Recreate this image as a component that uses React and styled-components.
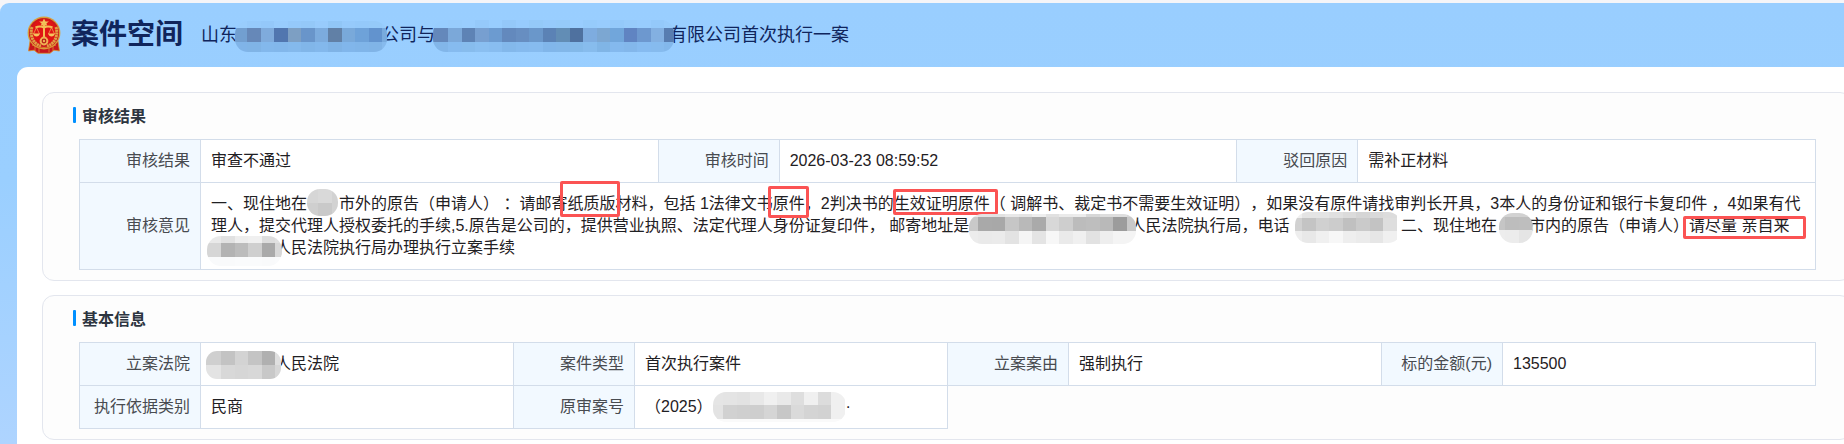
import React from 'react'
import styled, { createGlobalStyle } from 'styled-components'

const GlobalStyle = createGlobalStyle`
  *,
  *::before,
  *::after {
    box-sizing: border-box;
  }
  body {
    margin: 0;
    background: #f5f5f8;
    overflow: hidden;
    font-family: 'Liberation Sans', 'Noto Sans CJK SC', sans-serif;
    font-size: 16px;
    text-spacing-trim: space-all;
  }
`

const Page = styled.div`
  height: 441px;
  margin-top: 3px;
  padding-left: 17px;
  border-top-left-radius: 9px;
  background: linear-gradient(180deg, #99ceff 0%, #9acfff 40%, #aed4ff 100%);
  overflow: hidden;
`

const Header = styled.header`
  height: 64px;
  padding-left: 10px;
  display: flex;
  align-items: center;
`

const Title = styled.h1`
  margin: 0 0 0 10px;
  width: 130px;
  font-size: 28px;
  line-height: 40px;
  font-weight: 700;
  color: #10255c;
  white-space: nowrap;
`

const SubTitle = styled.div`
  font-size: 18px;
  line-height: 26px;
  color: #10255c;
  white-space: nowrap;
`

const Main = styled.main`
  width: 1850px;
  height: 377px;
  padding: 25px 0 0 25px;
  border-top-left-radius: 11px;
  background: #fff;
`

const Card = styled.section`
  width: 1810px;
  height: ${(p) => p.$height}px;
  margin-bottom: 14px;
  padding: 14px 0 0 30px;
  border: 1px solid #e3e6ee;
  border-radius: 12px;
  background: #fdfdfd;
`

const CardTitle = styled.h2`
  display: flex;
  align-items: center;
  height: 16px;
  margin: 0 0 16px;
  font-size: 16px;
  font-weight: 700;
  color: #2d3540;
  &::before {
    content: '';
    width: 3px;
    height: 16px;
    margin-right: 6px;
    border-radius: 1px;
    background: #0090ff;
  }
`

const Descriptions = styled.div`
  display: grid;
  grid-template-columns: repeat(${(p) => p.$columns}, 121px 1fr);
  width: 1736px;
  margin-left: 6px;
`

// 单元格边框用负外边距合并
const Cell = styled.div`
  display: flex;
  flex-direction: column;
  justify-content: center;
  min-height: 44px;
  margin: 0 -1px -1px 0;
  padding: 10px;
  border: 1px solid #d3ddea;
  line-height: 22px;
  white-space: nowrap;
`

const Label = styled(Cell)`
  align-items: flex-end;
  background: #f2f9ff;
  color: #484b50;
`

const Value = styled(Cell)`
  grid-column: span ${(p) => p.$span || 1};
  background: #fff;
  color: #1f2023;
`

const Mark = styled.span`
  position: relative;
  display: inline-block;
  &::after {
    content: '';
    position: absolute;
    left: ${(p) => p.$left}px;
    top: ${(p) => p.$top}px;
    width: ${(p) => p.$width}px;
    height: ${(p) => p.$height}px;
    border: 3px solid #fb5353;
    border-radius: 2px;
  }
`

const MaskHolder = styled.span`
  position: relative;
  display: inline-block;
  width: ${(p) => p.$width}px;
  height: 18px;
  vertical-align: middle;
  svg {
    position: absolute;
    left: ${(p) => p.$left}px;
    top: ${(p) => p.$top}px;
    z-index: 1;
  }
`

// 马赛克遮挡: rows = [{ y, h, colors }]
const Mask = ({ id, space, left, top, width, height, first = 13.5, radius, rows }) => (
  <MaskHolder $width={space} $left={left} $top={top}>
    <svg width={width} height={height} shapeRendering="crispEdges">
      <defs>
        <clipPath id={id}>
          <rect width={width} height={height} rx={radius} />
        </clipPath>
      </defs>
      <g clipPath={`url(#${id})`}>
        {rows.map((row) =>
          row.colors.split(' ').map((color, i) => (
            <rect
              key={`${row.y}-${i}`}
              x={i === 0 ? 0 : first + (i - 1) * 13.5}
              y={row.y}
              width={i === 0 ? first : 13.5}
              height={row.h}
              fill={color}
            />
          ))
        )}
      </g>
    </svg>
  </MaskHolder>
)

const Emblem = () => (
  <svg width="34" height="38" viewBox="0 0 34 38">
    <path d="M3 25 L1.5 35 L7 34.2 L11 37.3 L23 37.3 L27 34.2 L32.5 35 L31 25Z" fill="#c7161c" stroke="#d9972f" strokeWidth=".8" />
    <circle cx="17" cy="17" r="16.4" fill="#d8a03c" />
    <circle cx="17" cy="17" r="15.1" fill="#c9191c" />
    <circle cx="17" cy="15.5" r="12.3" fill="#e01414" />
    <path d="M5 11C2.500 19 6 28 14 30M29 11C31.500 19 28 28 20 30" fill="none" stroke="#e0a044" strokeWidth="3" strokeDasharray="2.200 .5" />
    <path d="M17 2.500L18.500 5.500H22L19.500 7.300L20 9.500H14L14.500 7.300L12 5.500H15.500Z" fill="#f1c35c" />
    <path d="M17 7V22M8.500 11.500Q13 9.500 17 11.500Q21 9.500 25.500 11.500" fill="none" stroke="#f3bd54" strokeWidth="2" />
    <path d="M9.500 11.500L6.500 18M9.500 11.500L12.500 18M24.500 11.500L21.500 18M24.500 11.500L27.500 18" stroke="#eeb458" strokeWidth=".7" />
    <path d="M6 17.500H13Q12 20.500 9.500 20.500Q7 20.500 6 17.500ZM21 17.500H28Q27 20.500 24.500 20.500Q22 20.500 21 17.500Z" fill="#f5c45e" />
    <circle cx="17" cy="25" r="3.400" fill="#b51d18" stroke="#efb152" strokeWidth="2" />
    <circle cx="17" cy="25" r="1.200" fill="#efb152" />
    <path d="M5 29Q17 34 29 29M8 30V35M12 32V36.500M22 32V36.500M26 30V35" fill="none" stroke="#e09033" strokeWidth=".8" />
  </svg>
)

const App = () => {
  return (
    <>
      <GlobalStyle />
      <Page>
        <Header>
          <Emblem />
          <Title>案件空间</Title>
          <SubTitle>
            山东
            <Mask
              id="m1" space={144} left={-2} top={-6} width={152} height={31} first={12} radius={13}
              rows={[
                { y: 0, h: 7, colors: '#99cdfd #96cafb #94c8fa #98ccfd #95c9fa #94c8f8 #98cbfc #91c6f6 #96cafb #94c9fa #95caf9 #96cbfc' },
                { y: 7, h: 14, colors: '#729fd0 #6688b8 #7fabdc #5176af #7d9fc3 #6995ca #7cabdd #6180a6 #79a9da #6ea2d9 #6293ce #78aadd' },
                { y: 21, h: 10, colors: '#80b4e8 #80b4e6 #83b8ec #82b7eb #84b9ec #81b6e9 #83b8ec #7fb3e6 #81b6eb #80b5e9 #80b4e7 #86baed' },
              ]}
            />
            公司与
            <Mask
              id="m2" space={234} left={-2} top={-7} width={241} height={32} first={1.5} radius={13}
              rows={[
                { y: 0, h: 8, colors: '#99cefe #98cdfe #98ccfc #99cdfe #95c9fa #98cdfe #94c8f9 #97cbfd #94c9f8 #96cafb #95caf9 #99cdfe #96cbfb #98ccfd #94c9fa #97cbfb #98ccfd #94c9fa #97cbfb' },
                { y: 8, h: 14, colors: '#6488bb #6488bb #7ba8d9 #5e83b5 #779fd0 #6c9bd0 #6389bd #678ec1 #6a97ca #5b82b5 #628db5 #4f719f #7eacdf #7ca7d2 #71a6db #6084c2 #6d98cf #83b0e1 #587db0' },
                { y: 22, h: 10, colors: '#82b6e9 #82b6e9 #86bbef #87bced #8abff1 #88bdf0 #83b8eb #85baee #86bbef #81b6ea #82b7e9 #83b9e9 #87bced #80b5e6 #84b9ee #83b7eb #86bbf0 #86bbee #83b8eb' },
              ]}
            />
            有限公司首次执行一案
          </SubTitle>
        </Header>

        <Main>
          <Card $height={189}>
            <CardTitle>审核结果</CardTitle>
            <Descriptions $columns={3}>
              <Label>审核结果</Label>
              <Value>审查不通过</Value>
              <Label>审核时间</Label>
              <Value>2026-03-23 08:59:52</Value>
              <Label>驳回原因</Label>
              <Value>需补正材料</Value>
              <Label>审核意见</Label>
              <Value $span={5}>
                <div>
                  一、现住地在
                  <Mask
                    id="m3" space={32} left={0} top={-7} width={31} height={27} first={11} radius={13}
                    rows={[
                      { y: 0, h: 14, colors: '#d6d6d6 #d9d9d9 #d2d2d2' },
                      { y: 14, h: 13, colors: '#cfcfcf #c9c9c9 #d2d2d2' },
                    ]}
                  />
                  市外的原告（申请人） ：请邮寄
                  <Mark $left={-7} $top={-12} $width={60} $height={36}>纸质版</Mark>
                  材料，包括 1法律文书
                  <Mark $left={-5} $top={-7} $width={41} $height={32}>原件</Mark>
                  ，2判决书的
                  <Mark $left={-1} $top={-4} $width={105} $height={26}>生效证明原件</Mark>
                  （ 调解书、裁定书不需要生效证明），如果没有原件请找审判长开具，3本人的身份证和银行卡复印件 ，4如果有代
                </div>
                <div>
                  理人，提交代理人授权委托的手续,5.原告是公司的，提供营业执照、法定代理人身份证复印件， 邮寄地址是
                  <Mask
                    id="m4" space={160.3} left={0} top={-4} width={167} height={30} first={9} radius={13}
                    rows={[
                      { y: 0, h: 3, colors: '#e9e9e9 #e3e3e3 #e2e2e2 #e8e8e8 #e4e4e4 #eeeeee #e1e1e1 #eaeaea #ececec #d7d7d7 #dddddd #dedede #d6d6d6' },
                      { y: 3, h: 14, colors: '#c9c9c9 #a9a9a9 #a8a8a8 #c6c6c6 #b9b9b9 #aaaaaa #d8d8d8 #cecece #bcbcbc #bebebe #b9b9b9 #9c9c9c #c8c8c8' },
                      { y: 17, h: 13, colors: '#ececec #eaeaea #ebebeb #e3e3e3 #f5f5f5 #e4e4e4 #f7f7f7 #eaeaea #f0f0f0 #e2e2e2 #eeeeee #f4f4f4 #f4f4f4' },
                    ]}
                  />
                  人民法院执行局，电话{' '}
                  <Mask
                    id="m5" space={107} left={1} top={-6} width={106} height={31} first={7} radius={13}
                    rows={[
                      { y: 0, h: 6, colors: '#f0f0f0 #e4e4e4 #e4e4e4 #e0e0e0 #dbdbdb #d5d5d5 #d9d9d9 #dcdcdc' },
                      { y: 6, h: 13, colors: '#d1d1d1 #c4c4c4 #d0d0d0 #cccccc #c0c0c0 #cacaca #c3c3c3 #dedede' },
                      { y: 19, h: 12, colors: '#eeeeee #e8e8e8 #f0f0f0 #f7f7f7 #eeeeee #ebebeb #e6e6e6 #f0f0f0' },
                    ]}
                  />
                  二、现住地在
                  <Mask
                    id="m6" space={32} left={2} top={-5} width={34} height={30} first={6} radius={14}
                    rows={[
                      { y: 0, h: 4, colors: '#d5d5d5 #d2d2d2 #d1d1d1 #dddddd' },
                      { y: 4, h: 13, colors: '#c5c5c5 #bdbdbd #bebebe #d3d3d3' },
                      { y: 17, h: 13, colors: '#ededed #ececec #e5e5e5 #ededed' },
                    ]}
                  />
                  市内的原告（申请人）
                  <Mark $left={-6} $top={1} $width={123} $height={23}>请尽量 亲自来</Mark>
                </div>
                <div>
                  <Mask
                    id="m7" space={64} left={-4} top={-4} width={75} height={30} first={14} radius={14}
                    rows={[
                      { y: 0, h: 7, colors: '#e9e9e9 #e1e1e1 #ededed #f0f0f0 #dddddd #e1e1e1' },
                      { y: 7, h: 14, colors: '#d6d6d6 #b3b3b3 #bcbcbc #cfcfcf #aaaaaa #d8d8d8' },
                      { y: 21, h: 9, colors: '#f9fafb #f9fafb #fafbfc #fafbfc #f9fafb #fafbfc' },
                    ]}
                  />
                  人民法院执行局办理执行立案手续
                </div>
              </Value>
            </Descriptions>
          </Card>

          <Card $height={145}>
            <CardTitle>基本信息</CardTitle>
            <Descriptions $columns={4}>
              <Label>立案法院</Label>
              <Value>
                <div>
                  <Mask
                    id="m8" space={64} left={-5} top={-5} width={75} height={28} first={15} radius={11}
                    rows={[
                      { y: 0, h: 14, colors: '#cfcfcf #c3c3c3 #d3d3d3 #c4c4c4 #b0b0b0 #dfdfdf' },
                      { y: 14, h: 14, colors: '#e3e3e3 #d8d8d8 #d6d6d6 #d8d8d8 #c8c8c8 #d6d6d6' },
                    ]}
                  />
                  人民法院
                </div>
              </Value>
              <Label>案件类型</Label>
              <Value>首次执行案件</Value>
              <Label>立案案由</Label>
              <Value>强制执行</Value>
              <Label>标的金额(元)</Label>
              <Value>135500</Value>
              <Label>执行依据类别</Label>
              <Value>民商</Value>
              <Label>原审案号</Label>
              <Value>
                <div>
                  （2025）
                  <Mask
                    id="m9" space={133} left={0} top={-7} width={133} height={30} first={10} radius={13}
                    rows={[
                      { y: 0, h: 13, colors: '#e5e5e5 #e4e4e4 #e2e2e2 #e8e8e8 #f0f0f0 #e9e9e9 #dedede #f0f0f0 #dcdcdc #f0f0f0' },
                      { y: 13, h: 14, colors: '#e3e3e3 #d1d1d1 #cfcfcf #cecece #d5d5d5 #c7c7c7 #dadada #d4d4d4 #d2d2d2 #f0f0f0' },
                      { y: 27, h: 3, colors: '#fafafa #fafafa #fafafa #fafafa #fafafa #fafafa #fafafa #fafafa #fafafa #fafafa' },
                    ]}
                  />
                  ·
                </div>
              </Value>
            </Descriptions>
          </Card>
        </Main>
      </Page>
    </>
  )
}

export default App
